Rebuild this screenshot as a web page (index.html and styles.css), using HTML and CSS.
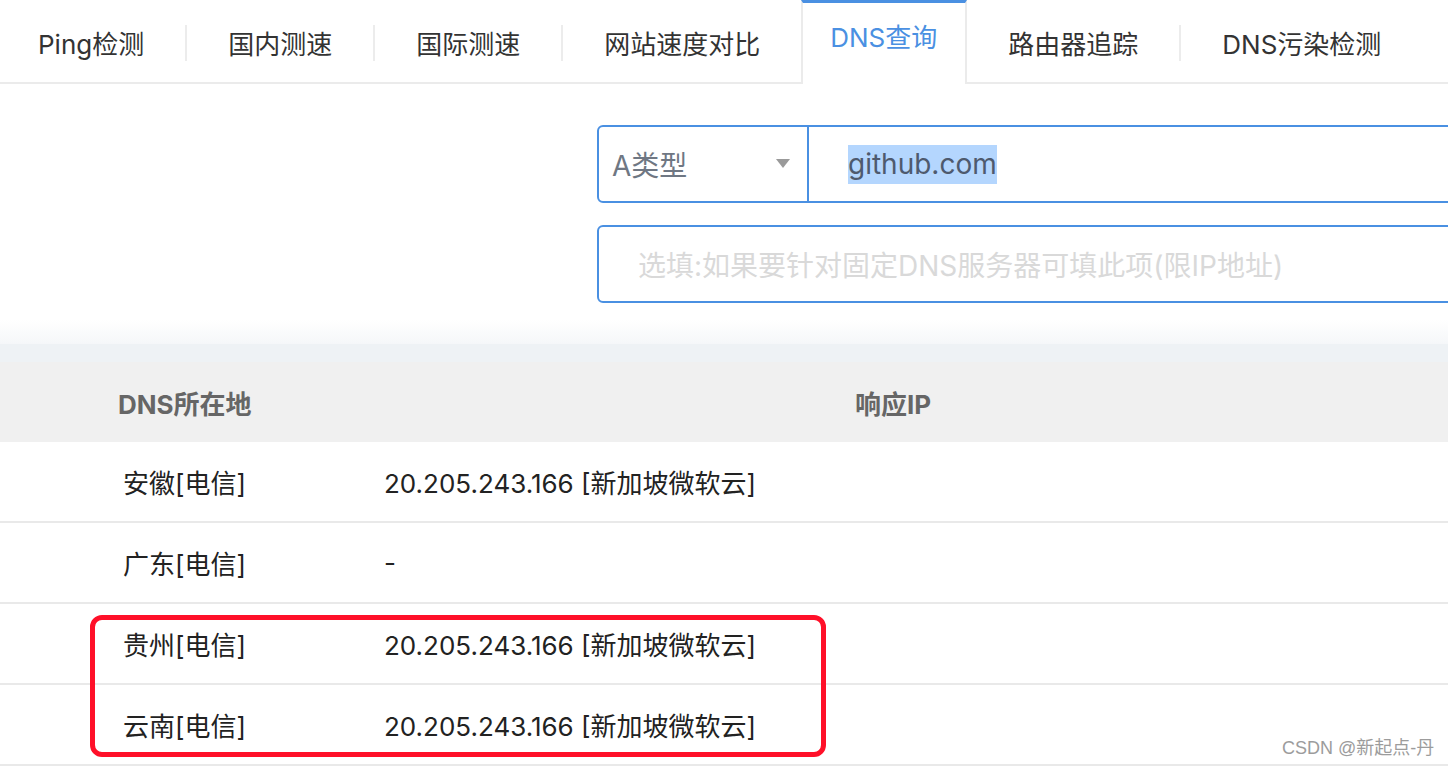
FILE: index.html
```html
<!DOCTYPE html>
<html lang="zh-CN">
<head>
  <meta charset="UTF-8" />
  <title>DNS查询</title>
  <link rel="stylesheet" href="styles.css">
</head>
<body>

<div class="page">
  <!-- 顶部标签 -->
  <nav class="tabs">
    <a class="tab first">Ping检测</a>
    <i class="sep"></i>
    <a class="tab">国内测速</a>
    <i class="sep"></i>
    <a class="tab">国际测速</a>
    <i class="sep"></i>
    <a class="tab">网站速度对比</a>
    <a class="tab active">DNS查询</a>
    <a class="tab">路由器追踪</a>
    <i class="sep"></i>
    <a class="tab">DNS污染检测</a>
  </nav>

  <!-- 查询表单 -->
  <div class="form">
    <div class="search">
      <div class="type">
        <span>A类型</span>
        <svg class="caret" width="14" height="9" viewBox="0 0 14 9"><path d="M0,0 L14,0 L7,9 Z" fill="#9a9a9a"/></svg>
      </div>
      <div class="domain"><span class="picked">github.com</span></div>
    </div>
    <div class="server">
      <span class="placeholder">选填:如果要针对固定DNS服务器可填此项(限IP地址)</span>
    </div>
  </div>

  <div class="shade"></div>
  <div class="band"></div>

  <!-- 结果表格 -->
  <div class="table">
    <div class="row head">
      <div class="cell loc">DNS所在地</div>
      <div class="cell ip">响应IP</div>
    </div>
    <div class="row">
      <div class="cell loc">安徽[电信]</div>
      <div class="cell ip">20.205.243.166 [新加坡微软云]</div>
    </div>
    <div class="row">
      <div class="cell loc">广东[电信]</div>
      <div class="cell ip">-</div>
    </div>
    <div class="row">
      <div class="cell loc">贵州[电信]</div>
      <div class="cell ip">20.205.243.166 [新加坡微软云]</div>
    </div>
    <div class="row">
      <div class="cell loc">云南[电信]</div>
      <div class="cell ip">20.205.243.166 [新加坡微软云]</div>
    </div>
  </div>

  <div class="mark"></div>
  <div class="watermark">CSDN @新起点-丹</div>
</div>

</body>
</html>
```

FILE: styles.css
```css
body { margin: 0; background: #fff; overflow: hidden; font-family: Inter, "Noto Sans CJK SC", sans-serif; color: #222; }
.page { position: relative; width: 1448px; height: 766px; overflow: hidden; }

.tabs { display: flex; align-items: center; height: 82px; border-bottom: 2px solid #ebebeb; }
.tab { box-sizing: border-box; height: 82px; padding: 8px 41px 0; line-height: 74px; font-size: 26px; color: #333; white-space: nowrap; }
.tab.first { padding-left: 38px; }
.tab.active { height: 84px; margin-bottom: -2px; align-self: flex-start; padding: 0 28px 0 27px; line-height: 70px; color: #4a90e2; background: #fff; border-top: 3px solid #4a90e2; border-left: 2px solid #ebebeb; border-right: 2px solid #ebebeb; }
.sep { width: 2px; height: 36px; background: #ececec; margin-top: 4px; }

.form { margin-left: 597px; padding: 41px 0 17px; width: 1000px; }
.search, .server { box-sizing: border-box; height: 78px; border: 2px solid #4a90e2; border-radius: 6px; display: flex; align-items: center; }
.server { margin-top: 22px; padding-left: 39px; }
.type { box-sizing: border-box; width: 210px; height: 100%; display: flex; align-items: center; justify-content: space-between; padding: 0 17px 0 13px; border-right: 2px solid #4a90e2; font-size: 28px; color: #6f7783; }
.caret { margin-top: -2px; }
.domain { padding-left: 39px; font-size: 28px; color: #4e5a6e; }
.picked { background: #b4d6fe; line-height: 39px; display: inline-block; }
.placeholder { font-size: 28px; color: #d9d9d9; }

.shade { height: 24px; background: linear-gradient(#fff, #f5f7f9); }
.band { height: 18px; background: #eef2f5; }

.row { display: flex; align-items: center; height: 79px; border-bottom: 2px solid #e9e9e9; font-size: 26px; }
.row.head { height: 80px; border-bottom: 0; background: #f0f0f0; font-weight: bold; color: #666; }
.cell.loc { width: 261px; padding-left: 123px; }
.cell.ip { flex: 1; }
.head .cell.loc { padding-left: 118px; width: 266px; }
.head .cell.ip { padding-left: 471px; }

.mark { position: absolute; left: 90px; top: 615px; width: 736px; height: 142px; box-sizing: border-box; border: 5px solid #ff1029; border-radius: 12px; }
.watermark { position: absolute; left: 1282px; top: 733px; font-size: 18px; color: #9c9c9c; text-shadow: 0 0 2px #fff; font-family: "Liberation Sans", "Noto Sans CJK SC", sans-serif; }
```
